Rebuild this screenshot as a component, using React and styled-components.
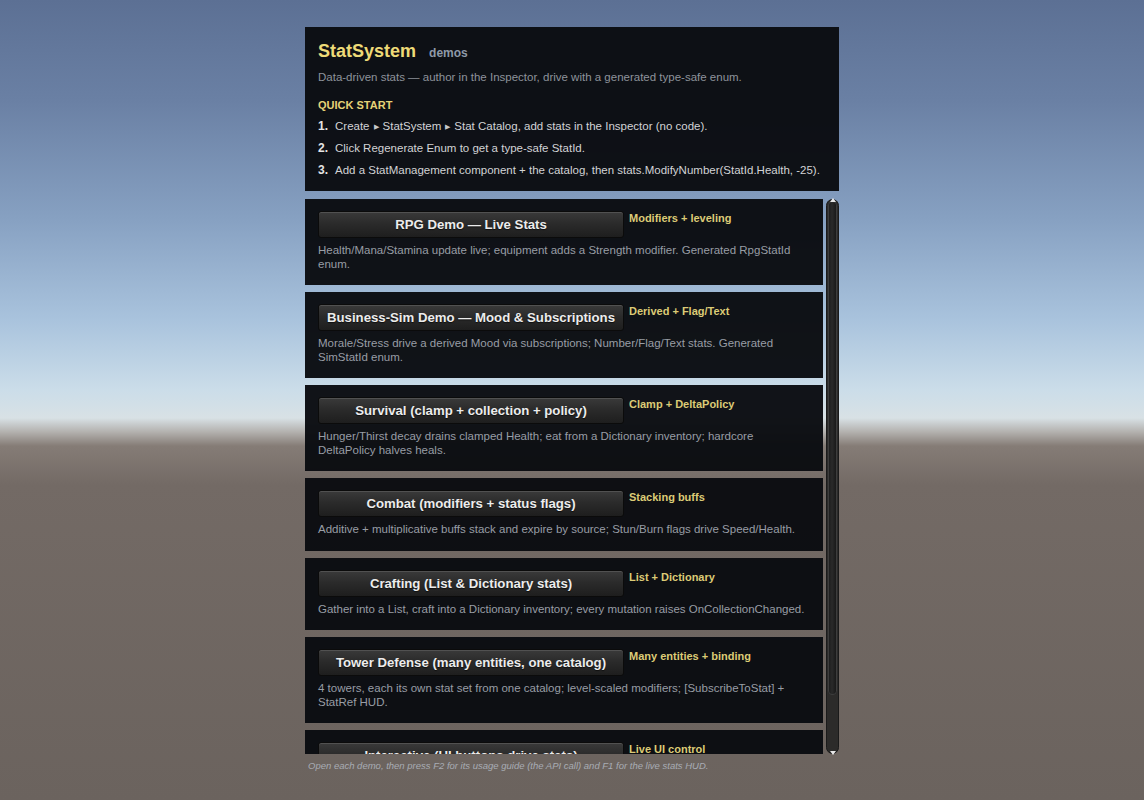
import React from 'react';
import styled, { createGlobalStyle } from 'styled-components';

const GlobalStyle = createGlobalStyle`
    html, body {
        margin:0;
        padding:0;
    }
    body {
        font-family:"Liberation Sans", Arial, sans-serif;
        background:#6a625d;
    }
`;

// skybox: blue sky fading to a pale horizon, then the grey-brown ground
const Scene = styled.div`
    width:1144px;
    height:800px;
    overflow:hidden;
    background:linear-gradient(
        to bottom,
        #5c7094 0px,
        #6a80a4 100px,
        #87a1c2 220px,
        #a9c3dd 320px,
        #cbdde9 390px,
        #d8e1e5 418px,
        #b3b1ae 432px,
        #857c76 446px,
        #736a65 485px,
        #6b635e 800px
    );
    display:flex;
    justify-content:center;
`;

const Column = styled.div`
    width:534px;
    padding-top:27px;
    display:flex;
    flex-direction:column;
`;

const Header = styled.div`
    background:rgba(10,12,17,0.97);
    padding:12px 13px 13px;
    display:flex;
    flex-direction:column;
`;

const TitleRow = styled.div`
    display:flex;
    align-items:baseline;
    gap:13px;
    line-height:22px;
    padding-top:1px;
`;

const Title = styled.span`
    font-size:18px;
    font-weight:700;
    color:#eedb78;
`;

const TitleSub = styled.span`
    font-size:12px;
    font-weight:700;
    color:#8f9aa8;
`;

const Subtitle = styled.div`
    margin-top:6px;
    font-size:11.5px;
    line-height:14px;
    color:#8e939b;
`;

const SectionLabel = styled.div`
    margin-top:14px;
    font-size:11px;
    line-height:14px;
    font-weight:700;
    color:#e6d377;
`;

const Steps = styled.ol`
    list-style:none;
    margin:6px 0 0;
    padding:0;
    display:flex;
    flex-direction:column;
    gap:6px;
`;

const Step = styled.li`
    display:flex;
    height:16px;
    align-items:center;
    font-size:11.5px;
    line-height:16px;
    color:#d2d3d5;

    & .num {
        width:17px;
        flex:none;
        font-weight:700;
        font-size:12px;
        color:#e4e4e4;
    }

    & .sep {
        display:inline-block;
        font-size:7px;
        line-height:0;
        vertical-align:1px;
        padding:0 4px;
        color:#c8c8c8;
    }
`;

const ListArea = styled.div`
    margin-top:8px;
    height:555px;
    display:flex;
    gap:3px;
`;

const Cards = styled.div`
    flex:1;
    overflow:hidden;
    display:flex;
    flex-direction:column;
    gap:7px;
`;

const Card = styled.div`
    flex:none;
    background:rgba(10,12,17,0.97);
    padding:12px 13px 14px;
    display:flex;
    flex-direction:column;
    gap:6px;
`;

const CardTop = styled.div`
    display:flex;
    align-items:flex-start;
    gap:5px;
`;

const DemoButton = styled.button`
    width:306px;
    height:27px;
    flex:none;
    border:1px solid #0b0b0b;
    border-radius:3px;
    background:linear-gradient(to bottom, #3a3a3a 0%, #2b2b2b 45%, #1e1e1e 100%);
    box-shadow:inset 0 1px 0 rgba(255,255,255,0.12);
    color:#ececec;
    font-family:"Liberation Sans", Arial, sans-serif;
    font-size:13.2px;
    font-weight:700;
    text-shadow:0 1px 1px rgba(0,0,0,0.6);
    padding:0;
    cursor:pointer;
`;

const Tag = styled.span`
    margin-top:1px;
    font-size:11px;
    line-height:13px;
    font-weight:700;
    color:#dccb76;
`;

const Desc = styled.div`
    font-size:11.5px;
    line-height:13.5px;
    color:#989da5;
`;

const Scrollbar = styled.div`
    width:13px;
    flex:none;
    position:relative;
    border-radius:7px;
    background:#2c2b2a;
    border:1px solid #1a1a1a;
    box-sizing:border-box;
`;

const Thumb = styled.div`
    height:${p => p.$size}px;
    margin:1px;
    border-radius:6px;
    background:linear-gradient(to right, #1a1a1a, #2a2a2a 45%, #151515);
    box-shadow:inset 0 0 0 1px #3d3d3d;
`;

const Arrow = styled.div`
    position:absolute;
    left:50%;
    transform:translateX(-50%);
    width:0;
    height:0;
    border-left:3px solid transparent;
    border-right:3px solid transparent;
    ${p => p.$up
        ? 'top:-2px; border-bottom:4px solid #e8e8e8;'
        : 'bottom:-2px; border-top:4px solid #e8e8e8;'}
`;

const Footer = styled.div`
    margin-top:6px;
    padding-left:3px;
    font-size:9.5px;
    line-height:12px;
    font-style:italic;
    color:#a8acb4;
`;

const demos = [
    {
        title: 'RPG Demo — Live Stats',
        tag: 'Modifiers + leveling',
        desc: 'Health/Mana/Stamina update live; equipment adds a Strength modifier. Generated RpgStatId enum.'
    },
    {
        title: 'Business-Sim Demo — Mood & Subscriptions',
        tag: 'Derived + Flag/Text',
        desc: 'Morale/Stress drive a derived Mood via subscriptions; Number/Flag/Text stats. Generated SimStatId enum.'
    },
    {
        title: 'Survival (clamp + collection + policy)',
        tag: 'Clamp + DeltaPolicy',
        desc: 'Hunger/Thirst decay drains clamped Health; eat from a Dictionary inventory; hardcore DeltaPolicy halves heals.'
    },
    {
        title: 'Combat (modifiers + status flags)',
        tag: 'Stacking buffs',
        desc: 'Additive + multiplicative buffs stack and expire by source; Stun/Burn flags drive Speed/Health.'
    },
    {
        title: 'Crafting (List & Dictionary stats)',
        tag: 'List + Dictionary',
        desc: 'Gather into a List, craft into a Dictionary inventory; every mutation raises OnCollectionChanged.'
    },
    {
        title: 'Tower Defense (many entities, one catalog)',
        tag: 'Many entities + binding',
        desc: '4 towers, each its own stat set from one catalog; level-scaled modifiers; [SubscribeToStat] + StatRef HUD.'
    },
    {
        title: 'Interactive (UI buttons drive stats)',
        tag: 'Live UI control',
        desc: 'Buttons call ModifyNumber / SetFlag / AddModifier directly; watch values react.'
    }
];

function DemoCard({ demo }) {
    return (
        <Card>
            <CardTop>
                <DemoButton>{demo.title}</DemoButton>
                <Tag>{demo.tag}</Tag>
            </CardTop>
            <Desc>{demo.desc}</Desc>
        </Card>
    );
}

function App() {
    return (
        <>
            <GlobalStyle />
            <Scene>
                <Column>
                    <Header>
                        <TitleRow>
                            <Title>StatSystem</Title>
                            <TitleSub>demos</TitleSub>
                        </TitleRow>
                        <Subtitle>Data-driven stats — author in the Inspector, drive with a generated type-safe enum.</Subtitle>
                        <SectionLabel>QUICK START</SectionLabel>
                        <Steps>
                            <Step>
                                <span className="num">1.</span>
                                <span>Create<span className="sep">▶</span>StatSystem<span className="sep">▶</span>Stat Catalog, add stats in the Inspector (no code).</span>
                            </Step>
                            <Step>
                                <span className="num">2.</span>
                                <span>Click Regenerate Enum to get a type-safe StatId.</span>
                            </Step>
                            <Step>
                                <span className="num">3.</span>
                                <span>Add a StatManagement component + the catalog, then stats.ModifyNumber(StatId.Health, -25).</span>
                            </Step>
                        </Steps>
                    </Header>

                    <ListArea>
                        <Cards>
                            {demos.map(d => <DemoCard key={d.title} demo={d} />)}
                        </Cards>
                        <Scrollbar>
                            <Arrow $up />
                            <Thumb $size={494} />
                            <Arrow />
                        </Scrollbar>
                    </ListArea>

                    <Footer>Open each demo, then press F2 for its usage guide (the API call) and F1 for the live stats HUD.</Footer>
                </Column>
            </Scene>
        </>
    );
}

export default App;
